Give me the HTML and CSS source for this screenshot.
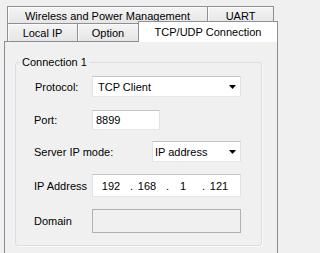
FILE: index.html
```html
<!DOCTYPE html>
<html>
<head>
<meta charset="utf-8">
<link rel="stylesheet" href="styles.css">
</head>
<body>
<div class="dialog">
  <div class="tabs">
    <div class="tabrow row-back">
      <div class="tab tab-wireless">Wireless and Power Management</div>
      <div class="tab tab-uart">UART</div>
    </div>
    <div class="tabrow row-front">
      <div class="tab tab-local">Local IP</div>
      <div class="tab tab-option">Option</div>
      <div class="tab tab-active">TCP/UDP Connection</div>
    </div>
  </div>
  <div class="panel">
    <div class="group">
      <div class="group-title">Connection 1</div>
      <div class="rows">
        <div class="row row-protocol">
          <span class="label label-protocol">Protocol:</span>
          <div class="combo combo-wide"><span class="combo-text">TCP Client</span><svg class="arrow" width="7" height="4" viewBox="0 0 7 4"><path d="M0 0H7L3.5 4Z" fill="#000"/></svg></div>
        </div>
        <div class="row row-port">
          <span class="label">Port:</span>
          <div class="field field-port">8899</div>
        </div>
        <div class="row row-mode">
          <span class="label label-mode">Server IP mode:</span>
          <div class="combo combo-narrow"><span class="combo-text">IP address</span><svg class="arrow" width="7" height="4" viewBox="0 0 7 4"><path d="M0 0H7L3.5 4Z" fill="#000"/></svg></div>
        </div>
        <div class="row row-ip">
          <span class="label">IP Address</span>
          <div class="field field-ip">
            <span class="octet">192</span><span class="dot">.</span><span class="octet">168</span><span class="dot">.</span><span class="octet">1</span><span class="dot">.</span><span class="octet">121</span>
          </div>
        </div>
        <div class="row row-domain">
          <span class="label">Domain</span>
          <div class="field field-disabled"></div>
        </div>
      </div>
    </div>
  </div>
</div>
</body>
</html>
```

FILE: styles.css
```css
html, body {
  margin: 0;
  padding: 0;
}
body {
  width: 281px;
  height: 253px;
  overflow: hidden;
  background: #f0f0f0;
  font-family: "Liberation Sans", Arial, sans-serif;
  font-size: 11px;
  color: #000;
}
.dialog {
  padding-top: 6px;
}
.tabrow {
  display: flex;
  margin-left: 7px;
}
.row-back {
  height: 17px;
}
.row-front {
  height: 18px;
  align-items: flex-end;
}
.tab {
  box-sizing: border-box;
  border: 1px solid #8e9096;
  border-bottom: none;
  background: linear-gradient(#f4f4f4, #e6e6e6);
  box-shadow: inset 1px 1px 0 #fbfbfb;
  display: flex;
  align-items: center;
  justify-content: center;
  white-space: nowrap;
}
.row-back .tab {
  height: 17px;
  padding-top: 1px;
}
.row-front .tab {
  height: 18px;
}
.tab-wireless { width: 201px; }
.tab-uart { width: 67px; margin-left: -1px; }
.tab-local { width: 71px; }
.tab-option { width: 62px; margin-left: -1px; }
.tab-active {
  width: 140px;
  height: 21px !important;
  margin-left: -1px;
  margin-bottom: -1px;
  background: #fff;
  box-shadow: none;
  position: relative;
  z-index: 1;
  padding-bottom: 1px;
}
.panel {
  box-sizing: border-box;
  margin-left: 4px;
  width: 274px;
  height: 212px;
  border: 1px solid #898c95;
  border-bottom: none;
  padding: 20px 0 0 10px;
}
.group {
  box-sizing: border-box;
  width: 247px;
  border: 1px solid #d5dfe5;
  border-radius: 3px;
  box-shadow: 1px 1px 0 #fafafa;
  padding-bottom: 12px;
}
.group-title {
  width: max-content;
  margin: -8px 0 0 4px;
  padding: 0 2px;
  line-height: 14px;
  background: #f0f0f0;
}
.rows {
  padding: 7px 0 0 18px;
}
.row {
  display: flex;
  align-items: center;
}
.label {
  width: 58px;
  flex: none;
  white-space: nowrap;
}
.label-protocol {
  padding-left: 1px;
  width: 57px;
}
.label-mode {
  width: 118px;
}
.row-protocol { height: 21px; margin-bottom: 13px; }
.row-port { height: 20px; margin-bottom: 11px; }
.row-mode { height: 21px; margin-bottom: 12px; }
.row-ip { height: 23px; margin-bottom: 12px; }
.row-domain { height: 24px; }
.combo, .field {
  box-sizing: border-box;
  height: 100%;
  background: #fff;
  border: 1px solid;
  border-color: #c2c6cc #dfe2e8 #e3e6ec #dfe2e8;
  display: flex;
  align-items: center;
}
.combo-wide {
  width: 149px;
  padding: 0 4px 0 5px;
}
.combo-narrow {
  width: 89px;
  padding: 0 4px 0 2px;
}
.combo-text {
  flex: 1;
}
.arrow {
  flex: none;
  margin-top: 1px;
}
.field-port {
  width: 68px;
  padding-left: 3px;
}
.field-ip {
  width: 149px;
  padding-left: 4px;
  padding-top: 1px;
}
.octet {
  width: 28px;
  text-align: center;
}
.dot {
  width: 8px;
  text-align: right;
}
.field-disabled {
  width: 149px;
  background: #f0f0f0;
  border-color: #adb2b5;
}
```
